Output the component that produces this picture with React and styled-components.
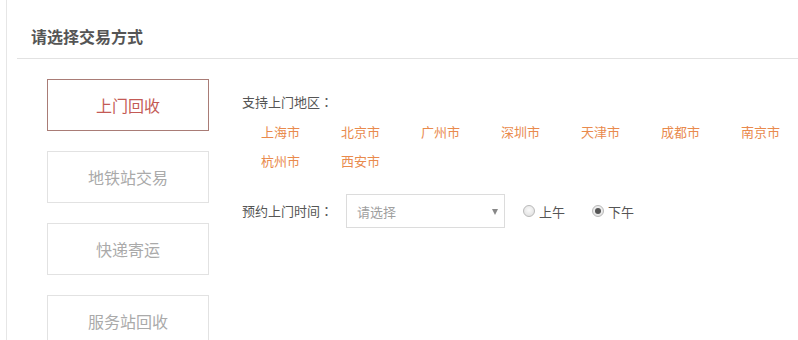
import React, { useState } from 'react';
import styled, { createGlobalStyle } from 'styled-components';

const GlobalStyle = createGlobalStyle`
  html, body {
    margin: 0;
    padding: 0;
    background: #fff;
    overflow: hidden;
  }
  body {
    font-family: "Noto Sans CJK SC", "Microsoft YaHei", sans-serif;
    color: #555;
    text-spacing-trim: space-all;
  }
`

const Page = styled.div`
  padding-left: 6px;
  width: 792px;
  height: 340px;
`
const Panel = styled.div`
  border-left: 1px solid #e6e6e6;
  padding-left: 10px;
  height: 100%;
`
const Header = styled.div`
  border-bottom: 1px solid #e2e2e2;
  padding: 27px 0 13px 14px;
`
const Title = styled.h2`
  margin: 0;
  font-size: 16px;
  line-height: 18px;
  font-weight: bold;
  color: #555;
`
const Body = styled.div`
  display: flex;
  padding: 20px 0 0 30px;
`
const Tabs = styled.div`
  display: flex;
  flex-direction: column;
  gap: 20px;
  width: 162px;
  flex-shrink: 0;
`
const Tab = styled.button`
  box-sizing: border-box;
  width: 162px;
  height: 52px;
  background: #fff;
  border: 1px solid ${p => (p.$active ? '#a97c76' : '#e2e2e2')};
  color: ${p => (p.$active ? '#c45a55' : '#aaa')};
  font-family: inherit;
  font-size: 16px;
  cursor: pointer;
  padding: 0;
`
const Content = styled.div`
  margin-left: 33px;
  padding-top: 13px;
  flex: 1;
  font-size: 13px;
`
const Label = styled.div`
  line-height: 20px;
  color: #555;
  white-space: nowrap;
`
const Colon = styled.span`
  display: inline-block;
  width: 13px;
  text-align: center;
  font-family: "Noto Sans CJK TC", sans-serif;
`
const Cities = styled.div`
  display: flex;
  flex-wrap: wrap;
  column-gap: 41px;
  padding: 5px 0 0 19px;
`
const City = styled.span`
  line-height: 29px;
  color: #e98a4d;
  cursor: pointer;
`
const TimeRow = styled.div`
  display: flex;
  align-items: center;
  margin-top: 19px;
`
const Select = styled.div`
  box-sizing: border-box;
  width: 159px;
  height: 34px;
  margin-left: 13px;
  border: 1px solid #dcdcdc;
  display: flex;
  align-items: center;
  justify-content: space-between;
  padding: 0 6px 0 10px;
  color: #a0a0a0;
`
const Arrow = styled.span`
  width: 0;
  height: 0;
  border-left: 3.5px solid transparent;
  border-right: 3.5px solid transparent;
  border-top: 6px solid #888;
  margin-top: 1px;
`
const Radio = styled.label`
  display: flex;
  align-items: center;
  margin-left: ${p => p.$first ? '18px' : '27px'};
  color: #555;
  cursor: pointer;
`
const Dot = styled.span`
  box-sizing: border-box;
  width: 12px;
  height: 12px;
  border-radius: 50%;
  border: 1px solid #b9b9b9;
  background: radial-gradient(circle at 50% 40%, #fafafa, #dcdcdc);
  margin-right: 4px;
  display: flex;
  align-items: center;
  justify-content: center;
  &::after {
    content: '';
    width: 6px;
    height: 6px;
    border-radius: 50%;
    background: ${p => p.$checked ? '#555' : 'transparent'};
  }
`

const tabs = ['上门回收', '地铁站交易', '快递寄运', '服务站回收'];
const cities = ['上海市', '北京市', '广州市', '深圳市', '天津市', '成都市', '南京市', '杭州市', '西安市'];

export default function App() {
  const [active, setActive] = useState(0);
  const [time, setTime] = useState('pm');
  return (
    <Page>
      <GlobalStyle />
      <Panel>
        <Header>
          <Title>请选择交易方式</Title>
        </Header>
        <Body>
          <Tabs>
            {tabs.map((t, i) => (
              <Tab key={t} $active={i === active} onClick={() => setActive(i)}>{t}</Tab>
            ))}
          </Tabs>
          <Content>
            <Label>支持上门地区<Colon>：</Colon></Label>
            <Cities>
              {cities.map(c => <City key={c}>{c}</City>)}
            </Cities>
            <TimeRow>
              <Label>预约上门时间<Colon>：</Colon></Label>
              <Select>
                请选择
                <Arrow />
              </Select>
              <Radio $first onClick={() => setTime('am')}>
                <Dot $checked={time === 'am'} />上午
              </Radio>
              <Radio onClick={() => setTime('pm')}>
                <Dot $checked={time === 'pm'} />下午
              </Radio>
            </TimeRow>
          </Content>
        </Body>
      </Panel>
    </Page>
  );
}
